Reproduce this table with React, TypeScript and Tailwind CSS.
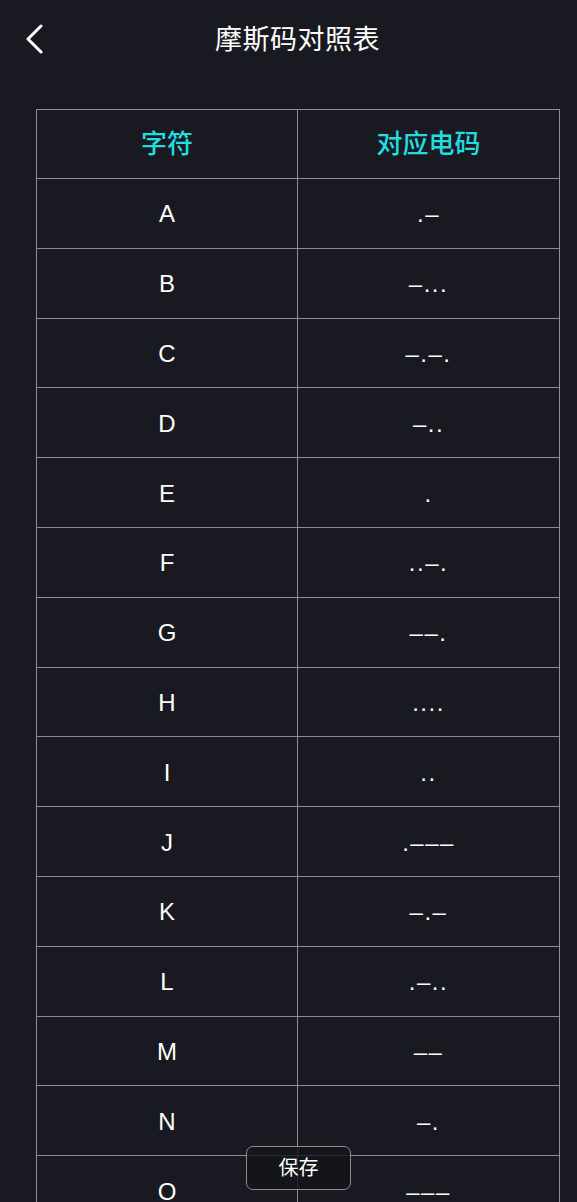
const rows: [string, string][] = [
  ["A", ".–"],
  ["B", "–..."],
  ["C", "–.–."],
  ["D", "–.."],
  ["E", "."],
  ["F", "..–."],
  ["G", "––."],
  ["H", "...."],
  ["I", ".."],
  ["J", ".–––"],
  ["K", "–.–"],
  ["L", ".–.."],
  ["M", "––"],
  ["N", "–."],
  ["O", "–––"],
];

const font = { fontFamily: '"Liberation Sans", "Noto Sans CJK SC", sans-serif' };

export default function App() {
  return (
    <div
      className="relative h-[1202px] w-[577px] overflow-hidden bg-[#191a21] text-white"
      style={font}
    >
      <header className="relative flex h-[80px] items-center">
        <button className="absolute left-[24px] top-[24px]">
          <svg width="20" height="30" viewBox="0 0 20 30" fill="none">
            <path
              d="M17 2 L4 15 L17 28"
              stroke="white"
              strokeWidth="3"
              strokeLinecap="round"
              strokeLinejoin="round"
            />
          </svg>
        </button>
        <h1 className="ml-[215px] text-[27px] font-normal tracking-[0.5px]">
          摩斯码对照表
        </h1>
      </header>

      <div className="ml-[36px] mt-[29px] w-[524px] border-l border-r border-t border-[#8d8d92]">
        <div className="grid h-[69px] grid-cols-2 border-b border-[#8d8d92] text-[26px] font-medium text-[#1fdde0]">
          <div className="flex items-center justify-center border-r border-[#8d8d92]">字符</div>
          <div className="flex items-center justify-center">对应电码</div>
        </div>
        {rows.map(([ch, code]) => (
          <div
            key={ch}
            className="grid h-[69.8px] grid-cols-2 border-b border-[#8d8d92] text-[24px]"
          >
            <div className="flex items-center justify-center border-r border-[#8d8d92] pt-[2px]">
              {ch}
            </div>
            <div className="flex items-center justify-center pt-[2px] tracking-[1.5px]">
              {code}
            </div>
          </div>
        ))}
      </div>

      <button className="absolute left-[246px] top-[1146px] flex h-[44px] w-[105px] items-center justify-center rounded-[7px] border border-[#8d8d92] bg-[#131419]/80 text-[20px] text-white">
        保存
      </button>
    </div>
  );
}
